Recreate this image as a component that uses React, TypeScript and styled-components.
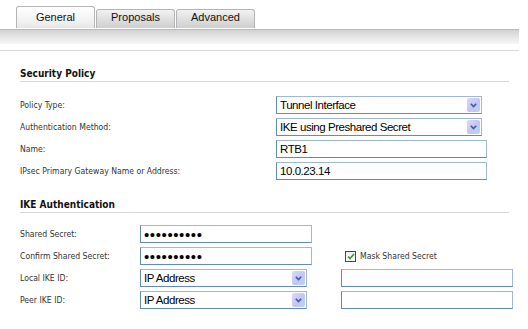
import React from "react";
import styled, { createGlobalStyle, css } from "styled-components";

const GlobalStyle = createGlobalStyle`
  html, body {
    margin: 0;
    padding: 0;
    background: #ffffff;
  }
  body {
    font-family: "DejaVu Sans Condensed", "DejaVu Sans", Tahoma, sans-serif;
    font-stretch: condensed;
  }
`;

const Page = styled.div`
  width: 528px;
  height: 329px;
  overflow: hidden;
  background: #fff;
`;

const TabStrip = styled.div`
  display: flex;
  align-items: flex-end;
  height: 28px;
  padding-left: 16px;
  gap: 1px;
`;

const Tab = styled.div<{ $active?: boolean }>`
  width: 79px;
  box-sizing: border-box;
  display: flex;
  align-items: center;
  justify-content: center;
  font-family: "Liberation Sans", Arial, sans-serif;
  font-stretch: normal;
  font-size: 11px;
  color: #111;
  border: 1px solid #b4b4b4;
  border-bottom: none;
  border-radius: 3px 3px 0 0;
  ${(p) =>
    p.$active
      ? css`
          height: 22px;
          background: linear-gradient(#ffffff, #f1f1f1 70%, #e6e6e6);
          padding-bottom: 2px;
        `
      : css`
          height: 19px;
          padding-bottom: 4px;
          background: linear-gradient(#f2f2f2, #dcdcdc 60%, #cfcfcf);
        `}
`;

const Bar = styled.div`
  width: 519px;
  height: 15px;
  margin-top: 1px;
  box-sizing: border-box;
  border-top: 1px solid #b9b9b9;
  background: linear-gradient(#d2d2d2, #e8e8e8 55%, #f6f6f6);
`;

const Rule = styled.div`
  width: 519px;
  height: 1px;
  margin-top: 6px;
  background: #dcdcdc;
`;

const Section = styled.section<{ $top: number }>`
  margin-top: ${(p) => p.$top}px;
  padding-left: 20px;
  width: 489px;
`;

const Heading = styled.h3`
  margin: 0;
  height: 13px;
  font-size: 10px;
  line-height: 12px;
  font-weight: bold;
  color: #111;
  border-bottom: 1px solid #d6d6d6;
`;

const Grid = styled.div<{ $cols: string; $top: number }>`
  display: grid;
  grid-template-columns: ${(p) => p.$cols};
  grid-auto-rows: 18px;
  row-gap: 4px;
  align-items: center;
  margin-top: ${(p) => p.$top}px;
`;

const Label = styled.div`
  font-size: 8.6px;
  color: #333;
  white-space: nowrap;
`;

const fieldFont = css`
  font-family: "Liberation Sans", Arial, sans-serif;
  font-stretch: normal;
  font-size: 11.5px;
  letter-spacing: -0.45px;
  color: #000;
  white-space: nowrap;
`;

const fieldBorder = css`
  box-sizing: border-box;
  height: 18px;
  border: 1px solid #9db8dc;
  border-left-color: #5f8ac4;
  border-bottom-color: #5f8ac4;
  background: #fff;
`;

const TextBox = styled.div<{ $w: number }>`
  ${fieldBorder};
  ${fieldFont};
  width: ${(p) => p.$w}px;
  padding: 0 3px;
  line-height: 16px;
  overflow: hidden;
`;

const Dots = styled.span`
  font-size: 15px;
  letter-spacing: 0.6px;
  line-height: 15px;
  position: relative;
  top: 1px;
`;

const SelectBox = styled.div<{ $w: number }>`
  ${fieldBorder};
  ${fieldFont};
  width: ${(p) => p.$w}px;
  display: flex;
  align-items: center;
  justify-content: space-between;
  padding: 0 1px 0 3px;
`;

const ArrowButton = styled.span`
  width: 13px;
  height: 14px;
  display: flex;
  align-items: center;
  justify-content: center;
  border-radius: 2px;
  background: linear-gradient(135deg, #dcd8fb, #c3c5f3 55%, #b9d2f6);
`;

const CheckRow = styled.label`
  display: flex;
  align-items: center;
  gap: 4px;
  padding-left: 4px;
  font-size: 8.6px;
  color: #333;
`;

const CheckBox = styled.span`
  width: 11px;
  height: 11px;
  box-sizing: border-box;
  border: 1px solid #1c5180;
  background: linear-gradient(#f0f0f0, #fff);
  display: flex;
  align-items: center;
  justify-content: center;
`;

const Blank = styled.div``;

function Chevron() {
  return (
    <svg width="7" height="5" viewBox="0 0 7 5">
      <path d="M0.8 0.8 L3.5 3.5 L6.2 0.8" fill="none" stroke="#3a5f9a" strokeWidth="1.6" />
    </svg>
  );
}

function Select({ value, width }: { value: string; width: number }) {
  return (
    <SelectBox $w={width}>
      <span>{value}</span>
      <ArrowButton>
        <Chevron />
      </ArrowButton>
    </SelectBox>
  );
}

function Tick() {
  return (
    <svg width="8" height="7" viewBox="0 0 8 7">
      <path d="M1 3.5 L3 5.5 L7 1" fill="none" stroke="#2e9a2e" strokeWidth="1.6" />
    </svg>
  );
}

export default function App() {
  return (
    <Page>
      <GlobalStyle />
      <TabStrip>
        <Tab $active>General</Tab>
        <Tab>Proposals</Tab>
        <Tab>Advanced</Tab>
      </TabStrip>
      <Bar />
      <Rule />

      <Section $top={17}>
        <Heading>Security Policy</Heading>
        <Grid $cols="256px auto" $top={14}>
          <Label>Policy Type:</Label>
          <Select value="Tunnel Interface" width={206} />
          <Label>Authentication Method:</Label>
          <Select value="IKE using Preshared Secret" width={206} />
          <Label>Name:</Label>
          <TextBox $w={211}>RTB1</TextBox>
          <Label>IPsec Primary Gateway Name or Address:</Label>
          <TextBox $w={211}>10.0.23.14</TextBox>
        </Grid>
      </Section>

      <Section $top={19}>
        <Heading>IKE Authentication</Heading>
        <Grid $cols="120px 201px auto" $top={12}>
          <Label>Shared Secret:</Label>
          <TextBox $w={172}>
            <Dots>••••••••••</Dots>
          </TextBox>
          <Blank />
          <Label>Confirm Shared Secret:</Label>
          <TextBox $w={172}>
            <Dots>••••••••••</Dots>
          </TextBox>
          <CheckRow>
            <CheckBox>
              <Tick />
            </CheckBox>
            Mask Shared Secret
          </CheckRow>
          <Label>Local IKE ID:</Label>
          <Select value="IP Address" width={167} />
          <TextBox $w={172} />
          <Label>Peer IKE ID:</Label>
          <Select value="IP Address" width={167} />
          <TextBox $w={172} />
        </Grid>
      </Section>
    </Page>
  );
}
